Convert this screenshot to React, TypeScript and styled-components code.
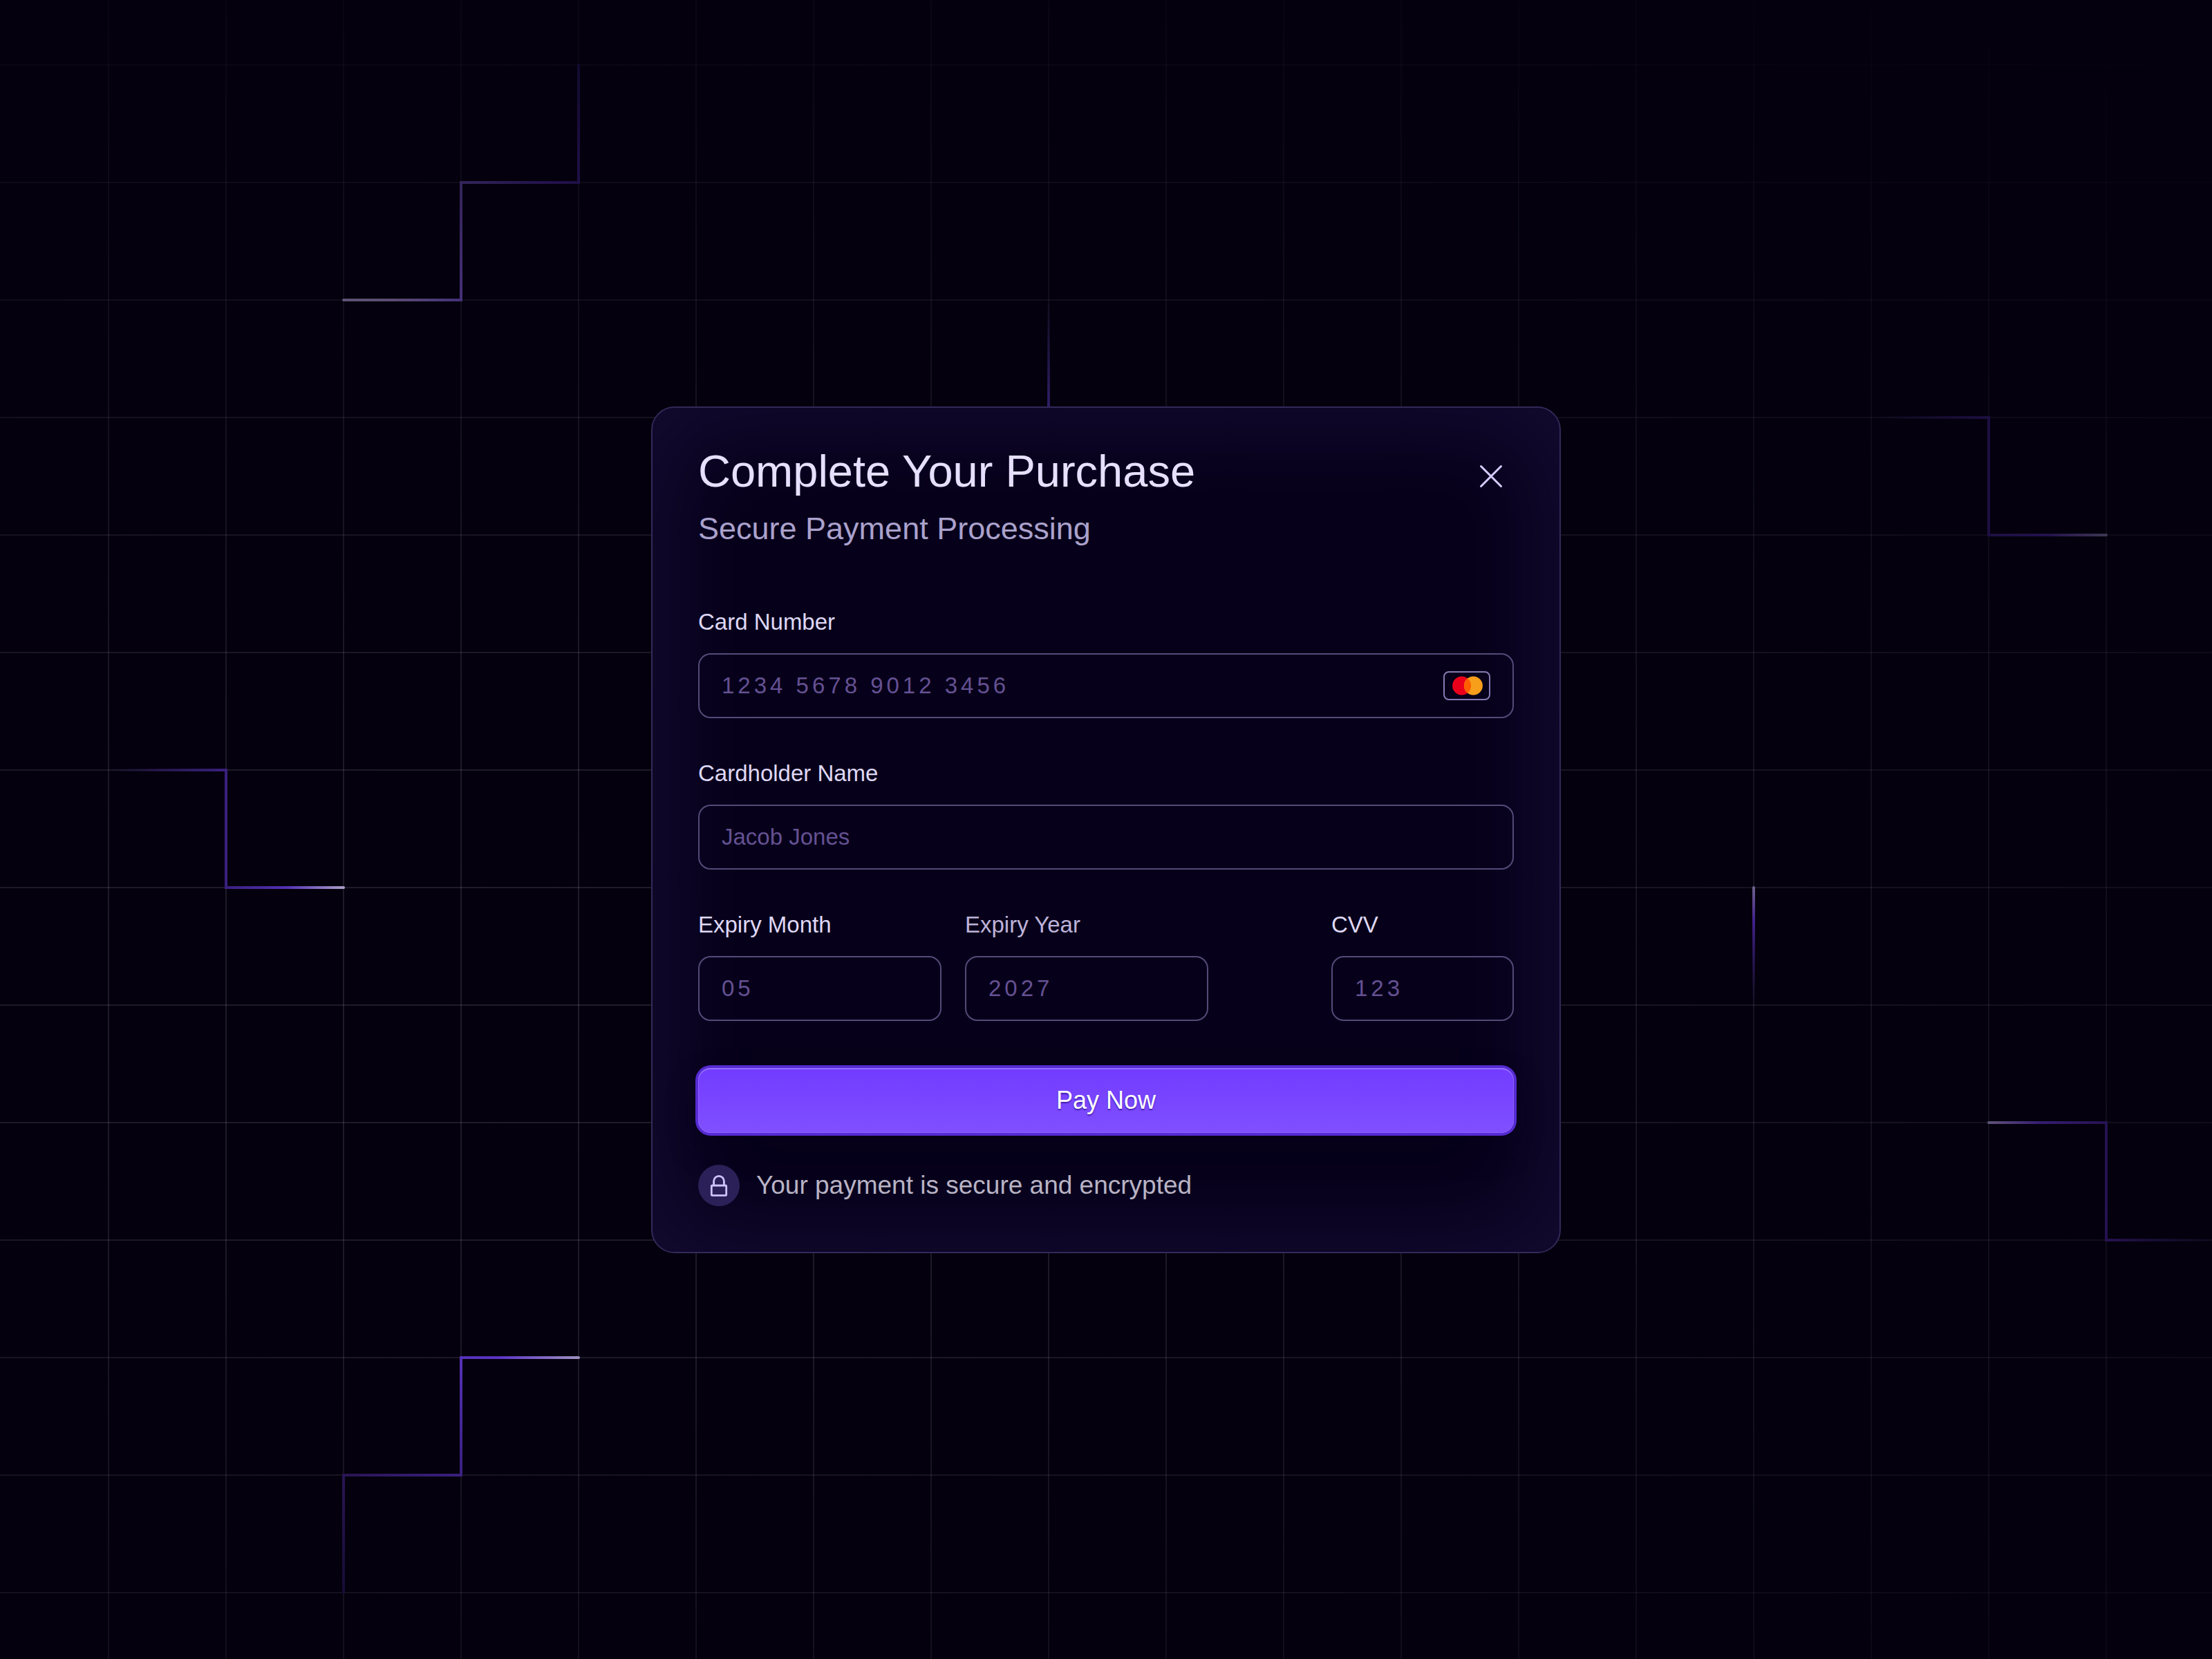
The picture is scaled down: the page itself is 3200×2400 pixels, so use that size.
import React from "react";
import styled, { createGlobalStyle } from "styled-components";

const GlobalStyle = createGlobalStyle`
  *, *::before, *::after { box-sizing: border-box; }
  body {
    margin: 0;
    background: #04000d;
    font-family: "Liberation Sans", Arial, sans-serif;
    -webkit-font-smoothing: antialiased;
  }
`;

const Stage = styled.main`
  position: relative;
  display: grid;
  place-items: center;
  min-height: 100vh;
  padding: 40px;
  overflow: hidden;
`;

const GridLines = styled.div`
  position: absolute;
  inset: 0;
  background-image:
    linear-gradient(to right, rgba(226, 222, 255, 0.13) 2px, transparent 2px),
    linear-gradient(to bottom, rgba(226, 222, 255, 0.13) 2px, transparent 2px);
  background-size: 170px 170px;
  background-position: 156px 93px;
  mask-image: radial-gradient(115% 74% at 30% 60%, #000 0%, rgba(0, 0, 0, 0.9) 25%, transparent 100%);
`;

const Traces = styled.svg`
  position: absolute;
  top: 0;
  left: 0;
  fill: none;
  stroke-width: 4;
  stroke-linecap: round;
`;

const Card = styled.form`
  position: relative;
  width: min(1316px, 100%);
  padding: 66px;
  border: 2px solid #33295a;
  border-radius: 34px;
  background: #07001a;
  box-shadow: inset 0 0 140px 24px rgba(140, 110, 255, 0.11);
`;

const Header = styled.header`
  display: flex;
  justify-content: space-between;
  align-items: flex-start;
  margin-bottom: 91px;
`;

const Headings = styled.div`
  display: flex;
  flex-direction: column;
  gap: 33px;
`;

const Title = styled.h1`
  margin: 0;
  font-size: 65px;
  font-weight: 400;
  line-height: 52px;
  color: #e6e0ff;
`;

const Subtitle = styled.p`
  margin: 0;
  font-size: 45px;
  line-height: 48px;
  color: #aaa2cc;
`;

const CloseButton = styled.button`
  display: grid;
  place-items: center;
  width: 66px;
  height: 66px;
  padding: 0;
  border: 0;
  background: none;
  cursor: pointer;
`;

const Fields = styled.div`
  display: flex;
  flex-direction: column;
  gap: 60px;
`;

const FieldRow = styled.div`
  display: flex;
  justify-content: space-between;
`;

const ExpiryGroup = styled.div`
  display: flex;
  gap: 34px;
`;

const Field = styled.div<{ $width?: string }>`
  display: flex;
  flex-direction: column;
  gap: 25px;
  width: ${(p) => p.$width ?? "100%"};
`;

const Label = styled.label<{ $muted?: boolean }>`
  font-size: 33px;
  line-height: 40px;
  color: ${(p) => (p.$muted ? "#bdb3d8" : "#dfd8f5")};
`;

const Control = styled.div`
  display: flex;
  align-items: center;
  height: 94px;
  padding: 0 32px;
  border: 2px solid #554a78;
  border-radius: 18px;

  &:focus-within {
    border-color: #8050ff;
  }
`;

const TextInput = styled.input<{ $numeric?: boolean }>`
  flex: 1;
  min-width: 0;
  height: 100%;
  padding: 0;
  border: 0;
  outline: 0;
  background: none;
  font-family: inherit;
  font-size: 33px;
  letter-spacing: ${(p) => (p.$numeric ? "5px" : "normal")};
  color: #e6e0ff;

  &::placeholder {
    color: #645192;
    opacity: 1;
  }
`;

const PayButton = styled.button`
  display: block;
  width: 100%;
  height: 94px;
  margin: 68px 0 46px;
  padding: 0;
  border: 0;
  border-radius: 18px;
  background: linear-gradient(to bottom, #723bff, #8050ff);
  box-shadow:
    0 0 0 4px #562bd2,
    inset 0 2px 1px #9470ff,
    inset 0 0 0 1px #8a5fff,
    0 20px 48px rgba(7, 0, 26, 0.3);
  font-family: inherit;
  font-size: 36px;
  color: #fff;
  text-shadow: 0 2px 2px rgba(30, 0, 110, 0.6);
  cursor: pointer;
`;

const SecureNote = styled.p`
  display: flex;
  align-items: center;
  gap: 24px;
  margin: 0;
  font-size: 37px;
  line-height: 60px;
  color: #b8b3c4;
`;

const LockBadge = styled.span`
  display: grid;
  width: 60px;
  height: 60px;
  border-radius: 50%;
  background: #2c2058;
`;

type Stop = [offset: number, color: string, opacity?: number];

interface Trace {
  id: string;
  d: string;
  axis: [number, number, number, number];
  stops: Stop[];
}

const traces: Trace[] = [
  {
    id: "top-left",
    d: "M497 434H667V264H837V94",
    axis: [497, 434, 837, 94],
    stops: [[0, "#5f5274"], [0.1, "#5c4d73"], [0.25, "#45317a"], [0.5, "#332459"], [0.7, "#22104c"], [1, "#140a30"]],
  },
  {
    id: "left",
    d: "M157 1114H327V1284H497",
    axis: [157, 1114, 499, 1114],
    stops: [[0, "#3a1f7d", 0], [0.5, "#3a2080"], [0.75, "#5430b4"], [1, "#ab9fc8"]],
  },
  {
    id: "bottom-left",
    d: "M837 1964H667V2134H497V2304",
    axis: [837, 1964, 497, 2304],
    stops: [[0, "#9f90c2"], [0.17, "#5c34c6"], [0.25, "#5531b8"], [0.5, "#3a2080"], [0.75, "#291554"], [1, "#170b36"]],
  },
  {
    id: "top",
    d: "M1517 434V604",
    axis: [1517, 434, 1517, 604],
    stops: [[0, "#2f1c66", 0], [1, "#33206e"]],
  },
  {
    id: "top-right",
    d: "M2707 604H2877V774H3047",
    axis: [2707, 604, 3047, 604],
    stops: [[0, "#1c0e3e", 0], [0.5, "#1d0f42"], [0.75, "#23124c"], [1, "#3f3753"]],
  },
  {
    id: "right",
    d: "M2537 1284V1454",
    axis: [2537, 1284, 2537, 1454],
    stops: [[0, "#6d5f8c"], [0.28, "#42218c"], [1, "#2a1566", 0]],
  },
  {
    id: "bottom-right",
    d: "M2877 1624H3047V1794H3217",
    axis: [2877, 1624, 3217, 1624],
    stops: [[0, "#5f5278"], [0.22, "#351d72"], [0.5, "#251250"], [1, "#1c0e3e", 0]],
  },
];

function CircuitTraces() {
  return (
    <Traces width="3200" height="2400" viewBox="0 0 3200 2400" aria-hidden="true">
      <defs>
        {traces.map(({ id, axis, stops }) => (
          <linearGradient
            key={id}
            id={id}
            gradientUnits="userSpaceOnUse"
            x1={axis[0]}
            y1={axis[1]}
            x2={axis[2]}
            y2={axis[3]}
          >
            {stops.map(([offset, color, opacity = 1]) => (
              <stop key={offset} offset={offset} stopColor={color} stopOpacity={opacity} />
            ))}
          </linearGradient>
        ))}
      </defs>
      {traces.map(({ id, d }) => (
        <path key={id} d={d} stroke={`url(#${id})`} />
      ))}
    </Traces>
  );
}

function CloseIcon() {
  return (
    <svg width="66" height="66" viewBox="0 0 66 66" fill="none" stroke="#d6ceff" strokeWidth="3" strokeLinecap="round" aria-hidden="true">
      <path d="M18.5 18.5 47.5 47.5M47.5 18.5 18.5 47.5" />
    </svg>
  );
}

function MastercardIcon() {
  return (
    <svg width="68" height="42" viewBox="0 0 68 42" fill="none" role="img" aria-label="Mastercard">
      <rect x="1" y="1" width="66" height="40" rx="7" stroke="#877ab2" strokeWidth="2" />
      <circle cx="26.6" cy="21" r="13.5" fill="#eb001b" />
      <circle cx="43.4" cy="21" r="13.5" fill="#f79e1b" />
      <path d="M35 10.4a13.5 13.5 0 0 1 0 21.2 13.5 13.5 0 0 1 0-21.2Z" fill="#ff5f00" />
    </svg>
  );
}

function LockIcon() {
  return (
    <svg width="60" height="60" viewBox="0 0 60 60" fill="none" stroke="#cdc4ff" strokeWidth="2.8" strokeLinejoin="round" aria-hidden="true">
      <rect x="19.3" y="30" width="21.4" height="14.4" rx="1" />
      <path d="M22.6 30V23.8a7.4 7.4 0 0 1 14.8 0V30" />
    </svg>
  );
}

interface TextFieldProps {
  id: string;
  label: string;
  placeholder: string;
  numeric?: boolean;
  muted?: boolean;
  width?: string;
  children?: React.ReactNode;
}

function TextField({ id, label, placeholder, numeric, muted, width, children }: TextFieldProps) {
  return (
    <Field $width={width}>
      <Label htmlFor={id} $muted={muted}>
        {label}
      </Label>
      <Control>
        <TextInput
          id={id}
          type="text"
          inputMode={numeric ? "numeric" : "text"}
          placeholder={placeholder}
          $numeric={numeric}
        />
        {children}
      </Control>
    </Field>
  );
}

export default function App() {
  return (
    <>
      <GlobalStyle />
      <Stage>
        <GridLines />
        <CircuitTraces />
        <Card onSubmit={(e) => e.preventDefault()}>
          <Header>
            <Headings>
              <Title>Complete Your Purchase</Title>
              <Subtitle>Secure Payment Processing</Subtitle>
            </Headings>
            <CloseButton type="button" aria-label="Close">
              <CloseIcon />
            </CloseButton>
          </Header>
          <Fields>
            <TextField id="card-number" label="Card Number" placeholder="1234 5678 9012 3456" numeric>
              <MastercardIcon />
            </TextField>
            <TextField id="cardholder" label="Cardholder Name" placeholder="Jacob Jones" />
            <FieldRow>
              <ExpiryGroup>
                <TextField id="month" label="Expiry Month" placeholder="05" width="352px" numeric />
                <TextField id="year" label="Expiry Year" placeholder="2027" width="352px" numeric muted />
              </ExpiryGroup>
              <TextField id="cvv" label="CVV" placeholder="123" width="264px" numeric />
            </FieldRow>
          </Fields>
          <PayButton type="submit">Pay Now</PayButton>
          <SecureNote>
            <LockBadge>
              <LockIcon />
            </LockBadge>
            Your payment is secure and encrypted
          </SecureNote>
        </Card>
      </Stage>
    </>
  );
}
